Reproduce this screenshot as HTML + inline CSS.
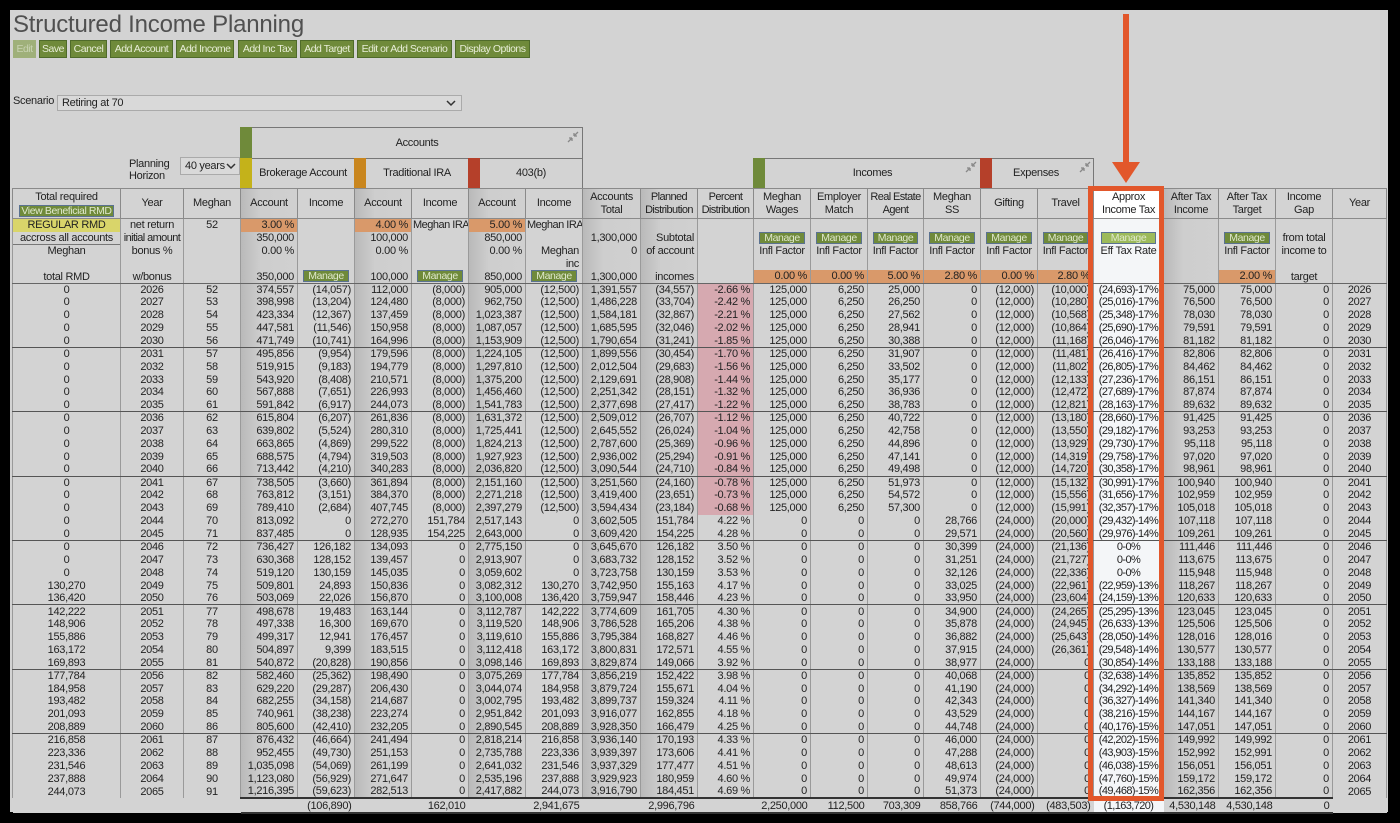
<!DOCTYPE html>
<html><head><meta charset="utf-8"><style>
*{box-sizing:border-box}
body{margin:0;width:1400px;height:823px;background:#000;position:relative;overflow:hidden;font-family:"Liberation Sans",sans-serif;font-size:11px;color:#222;letter-spacing:-0.3px}
.pg{position:absolute;left:10px;top:10px;width:1378px;height:802px;background:#d3d3d3}
.a{position:absolute}
h1{position:absolute;left:13px;top:11px;margin:0;font-size:24px;font-weight:normal;color:#505050;letter-spacing:-0.2px}
.btn{position:absolute;top:40px;height:18px;background:#6f8a3a;border:1px solid #4f6b2a;color:#e8eed8;font-size:10.5px;letter-spacing:-0.5px;line-height:16px;text-align:center;white-space:nowrap;overflow:hidden}
.mb{display:block;margin:0 2px;height:12px;background:#6f8a3a;border:1px solid #5a7290;color:#dfe8cc;font-size:10.5px;letter-spacing:-0.4px;line-height:10px;text-align:center;overflow:hidden}
.sel{position:absolute;background:#d9d9d9;border:1px solid #aaa;font-size:11px;line-height:14px;padding-left:4px}
table{position:absolute;left:12px;top:188px;border-collapse:collapse;table-layout:fixed;width:1374px}
td{padding:0 3px;white-space:nowrap;overflow:hidden;border-left:1px solid #9a9a9a;border-right:1px solid #9a9a9a;line-height:12px;text-align:right}
td:nth-child(-n+3),td:nth-child(19),td:nth-child(23){text-align:center}
td:nth-child(19){letter-spacing:-0.6px;padding:0 1px}
tr.h td{height:30px;text-align:center;border:1px solid #8a8a8a;line-height:13px;vertical-align:middle;padding:0 1px}
tr.p td{height:13px;vertical-align:middle}
tr.p4 td{height:23px;vertical-align:bottom;border-bottom:1px solid #666}
tbody.d tr{height:12.875px}
tbody.d td{height:12.875px}
tr.g td{border-bottom:1px solid #555}
td.n{background:#d6a9b0}
td.o{background:#d9996a}
td.l{text-align:left;padding:0 1px;letter-spacing:-0.5px}
.ob{display:block;background:#d9996a;margin:0 -3px;padding:0 3px;height:13px;line-height:13px}
col.k{background:linear-gradient(90deg,#b9b9b9,#cecece 35%,#d0d0d0)}
col.t{background:#f4f6f8}
tr.tot td{border-left:none;border-right:none;border-top:2px solid #333;border-bottom:2px solid #333;height:15px}
tr.tot td.e{border:none;background:#d3d3d3}
.box{position:absolute;border:1px solid #777;background:#d3d3d3;text-align:center}
.sw{position:absolute}
.sq{letter-spacing:-0.6px}
</style></head><body>
<div class="pg"></div>
<h1>Structured Income Planning</h1>
<div class="btn" style="left:13px;width:23px;background:#9fb07a;border-color:#9fb07a;color:#c9d3b3">Edit</div>
<div class="btn" style="left:39px;width:28px">Save</div>
<div class="btn" style="left:70px;width:37px">Cancel</div>
<div class="btn" style="left:110px;width:63px">Add Account</div>
<div class="btn" style="left:176px;width:58px">Add Income</div>
<div class="btn" style="left:238px;width:59px">Add Inc Tax</div>
<div class="btn" style="left:300px;width:54px">Add Target</div>
<div class="btn" style="left:357px;width:95px">Edit or Add Scenario</div>
<div class="btn" style="left:455px;width:75px">Display Options</div>
<div class="a" style="left:13px;top:95px">Scenario</div>
<div class="sel" style="left:57px;top:95px;width:405px;height:16px">Retiring at 70<svg style="position:absolute;right:5px;top:4px" width="10" height="7"><path d="M1 1 L5 5 L9 1" stroke="#333" stroke-width="1.5" fill="none"/></svg></div>
<div class="a" style="left:129px;top:158px;line-height:12px">Planning<br>Horizon</div>
<div class="sel" style="left:180px;top:157px;width:60px;height:18px;line-height:16px">40 years<svg style="position:absolute;right:3px;top:5px" width="10" height="7"><path d="M1 1 L5 5 L9 1" stroke="#333" stroke-width="1.5" fill="none"/></svg></div>

<div class="box" style="left:240px;top:127px;width:343px;height:62px"></div>
<div class="a" style="left:252px;top:158px;width:330px;border-top:1px solid #777"></div>
<div class="sw" style="left:240px;top:127px;width:12px;height:31px;background:#6f8a3a"></div>
<div class="a" style="left:252px;top:137px;width:330px;text-align:center">Accounts</div>
<div class="sw" style="left:240px;top:158px;width:12px;height:30px;background:#c4b21a"></div>
<div class="a" style="left:252px;top:167px;width:102px;text-align:center">Brokerage Account</div>
<div class="sw" style="left:354px;top:158px;width:12px;height:30px;background:#c9861e"></div>
<div class="a" style="left:366px;top:167px;width:102px;text-align:center">Traditional IRA</div>
<div class="sw" style="left:468px;top:158px;width:12px;height:30px;background:#b5402a"></div>
<div class="a" style="left:480px;top:167px;width:102px;text-align:center">403(b)</div>

<div class="box" style="left:753px;top:158px;width:228px;height:31px"></div>
<div class="sw" style="left:753px;top:158px;width:12px;height:30px;background:#6f8a3a"></div>
<div class="a" style="left:765px;top:167px;width:215px;text-align:center">Incomes</div>
<div class="box" style="left:980px;top:158px;width:114px;height:31px"></div>
<div class="sw" style="left:980px;top:158px;width:12px;height:30px;background:#b5402a"></div>
<div class="a" style="left:992px;top:167px;width:88px;text-align:center">Expenses</div>

<svg class="a" style="left:566px;top:130px" width="14" height="14"><path d="M2 12 L6 8 M6 8 L3 8 M6 8 L6 11 M12 2 L8 6 M8 6 L11 6 M8 6 L8 3" stroke="#888" stroke-width="1.3" fill="none"/></svg>
<svg class="a" style="left:964px;top:160px" width="14" height="14"><path d="M2 12 L6 8 M6 8 L3 8 M6 8 L6 11 M12 2 L8 6 M8 6 L11 6 M8 6 L8 3" stroke="#888" stroke-width="1.3" fill="none"/></svg>
<svg class="a" style="left:1078px;top:160px" width="14" height="14"><path d="M2 12 L6 8 M6 8 L3 8 M6 8 L6 11 M12 2 L8 6 M8 6 L11 6 M8 6 L8 3" stroke="#888" stroke-width="1.3" fill="none"/></svg>

<table>
<colgroup><col style="width:108px"><col style="width:63px"><col style="width:57px"><col class="k" style="width:57px"><col style="width:57px"><col class="k" style="width:57px"><col style="width:57px"><col class="k" style="width:57px"><col style="width:57px"><col class="k" style="width:58px"><col class="k" style="width:57px"><col style="width:56px"><col style="width:57px"><col style="width:57px"><col style="width:56px"><col style="width:57px"><col style="width:57px"><col style="width:56px"><col class="t" style="width:70px"><col class="k" style="width:55px"><col style="width:57px"><col style="width:57px"><col style="width:54px"></colgroup>
<tbody>
<tr class="h"><td style="padding:0 4px">Total required<span class="mb" style="margin:1px 2px 0;height:12px">View Beneficial RMD</span></td><td>Year</td><td>Meghan</td><td>Account</td><td>Income</td><td>Account</td><td>Income</td><td>Account</td><td>Income</td><td>Accounts<br>Total</td><td class="sq">Planned<br>Distribution</td><td class="sq">Percent<br>Distribution</td><td>Meghan<br>Wages</td><td>Employer<br>Match</td><td class="sq">Real Estate<br>Agent</td><td>Meghan<br>SS</td><td>Gifting</td><td>Travel</td><td style="background:#fff;letter-spacing:-0.3px">Approx<br>Income Tax</td><td>After Tax<br>Income</td><td>After Tax<br>Target</td><td>Income<br>Gap</td><td>Year</td></tr>
<tr class="p"><td style="background:#d9d56a">REGULAR RMD</td><td>net return</td><td>52</td><td class="o">3.00 %</td><td></td><td class="o">4.00 %</td><td class="l">Meghan IRA</td><td class="o">5.00 %</td><td class="l">Meghan IRA</td><td></td><td></td><td></td><td></td><td></td><td></td><td></td><td></td><td></td><td></td><td></td><td></td><td></td><td></td></tr>
<tr class="p"><td>accross all accounts</td><td class="sq" style="padding:0 1px">initial amount</td><td></td><td>350,000</td><td></td><td>100,000</td><td></td><td>850,000</td><td></td><td>1,300,000</td><td>Subtotal</td><td></td><td><span class="mb">Manage</span></td><td><span class="mb">Manage</span></td><td><span class="mb">Manage</span></td><td><span class="mb">Manage</span></td><td><span class="mb">Manage</span></td><td><span class="mb">Manage</span></td><td><span class="mb" style="background:#9cba5a;margin:0 6px">Manage</span></td><td></td><td><span class="mb">Manage</span></td><td style="text-align:center">from total</td><td></td></tr>
<tr class="p"><td style="border-top:1px solid #777">Meghan</td><td>bonus %</td><td></td><td>0.00 %</td><td></td><td>0.00 %</td><td></td><td>0.00 %</td><td>Meghan</td><td>0</td><td>of account</td><td></td><td style="text-align:center">Infl Factor</td><td style="text-align:center">Infl Factor</td><td style="text-align:center">Infl Factor</td><td style="text-align:center">Infl Factor</td><td style="text-align:center">Infl Factor</td><td style="text-align:center">Infl Factor</td><td style="letter-spacing:-0.3px">Eff Tax Rate</td><td></td><td style="text-align:center">Infl Factor</td><td style="text-align:center">income to</td><td></td></tr>
<tr class="p4"><td>total RMD</td><td>w/bonus</td><td></td><td>350,000</td><td><span class="mb" style="margin-bottom:1px">Manage</span></td><td>100,000</td><td><span class="mb" style="margin-bottom:1px">Manage</span></td><td>850,000</td><td>inc<span class="mb" style="margin-bottom:1px">Manage</span></td><td>1,300,000</td><td>incomes</td><td></td><td><span class="ob">0.00 %</span></td><td><span class="ob">0.00 %</span></td><td><span class="ob">5.00 %</span></td><td><span class="ob">2.80 %</span></td><td><span class="ob">0.00 %</span></td><td><span class="ob">2.80 %</span></td><td></td><td></td><td><span class="ob">2.00 %</span></td><td style="text-align:center">target</td><td></td></tr>
</tbody>
<tbody class="d">
<tr><td>0<td>2026<td>52<td>374,557<td>(14,057)<td>112,000<td>(8,000)<td>905,000<td>(12,500)<td>1,391,557<td>(34,557)<td class="n">-2.66 %<td>125,000<td>6,250<td>25,000<td>0<td>(12,000)<td>(10,000)<td>(24,693)-17%<td>75,000<td>75,000<td>0<td>2026</tr>
<tr><td>0<td>2027<td>53<td>398,998<td>(13,204)<td>124,480<td>(8,000)<td>962,750<td>(12,500)<td>1,486,228<td>(33,704)<td class="n">-2.42 %<td>125,000<td>6,250<td>26,250<td>0<td>(12,000)<td>(10,280)<td>(25,016)-17%<td>76,500<td>76,500<td>0<td>2027</tr>
<tr><td>0<td>2028<td>54<td>423,334<td>(12,367)<td>137,459<td>(8,000)<td>1,023,387<td>(12,500)<td>1,584,181<td>(32,867)<td class="n">-2.21 %<td>125,000<td>6,250<td>27,562<td>0<td>(12,000)<td>(10,568)<td>(25,348)-17%<td>78,030<td>78,030<td>0<td>2028</tr>
<tr><td>0<td>2029<td>55<td>447,581<td>(11,546)<td>150,958<td>(8,000)<td>1,087,057<td>(12,500)<td>1,685,595<td>(32,046)<td class="n">-2.02 %<td>125,000<td>6,250<td>28,941<td>0<td>(12,000)<td>(10,864)<td>(25,690)-17%<td>79,591<td>79,591<td>0<td>2029</tr>
<tr class="g"><td>0<td>2030<td>56<td>471,749<td>(10,741)<td>164,996<td>(8,000)<td>1,153,909<td>(12,500)<td>1,790,654<td>(31,241)<td class="n">-1.85 %<td>125,000<td>6,250<td>30,388<td>0<td>(12,000)<td>(11,168)<td>(26,046)-17%<td>81,182<td>81,182<td>0<td>2030</tr>
<tr><td>0<td>2031<td>57<td>495,856<td>(9,954)<td>179,596<td>(8,000)<td>1,224,105<td>(12,500)<td>1,899,556<td>(30,454)<td class="n">-1.70 %<td>125,000<td>6,250<td>31,907<td>0<td>(12,000)<td>(11,481)<td>(26,416)-17%<td>82,806<td>82,806<td>0<td>2031</tr>
<tr><td>0<td>2032<td>58<td>519,915<td>(9,183)<td>194,779<td>(8,000)<td>1,297,810<td>(12,500)<td>2,012,504<td>(29,683)<td class="n">-1.56 %<td>125,000<td>6,250<td>33,502<td>0<td>(12,000)<td>(11,802)<td>(26,805)-17%<td>84,462<td>84,462<td>0<td>2032</tr>
<tr><td>0<td>2033<td>59<td>543,920<td>(8,408)<td>210,571<td>(8,000)<td>1,375,200<td>(12,500)<td>2,129,691<td>(28,908)<td class="n">-1.44 %<td>125,000<td>6,250<td>35,177<td>0<td>(12,000)<td>(12,133)<td>(27,236)-17%<td>86,151<td>86,151<td>0<td>2033</tr>
<tr><td>0<td>2034<td>60<td>567,888<td>(7,651)<td>226,993<td>(8,000)<td>1,456,460<td>(12,500)<td>2,251,342<td>(28,151)<td class="n">-1.32 %<td>125,000<td>6,250<td>36,936<td>0<td>(12,000)<td>(12,472)<td>(27,689)-17%<td>87,874<td>87,874<td>0<td>2034</tr>
<tr class="g"><td>0<td>2035<td>61<td>591,842<td>(6,917)<td>244,073<td>(8,000)<td>1,541,783<td>(12,500)<td>2,377,698<td>(27,417)<td class="n">-1.22 %<td>125,000<td>6,250<td>38,783<td>0<td>(12,000)<td>(12,821)<td>(28,163)-17%<td>89,632<td>89,632<td>0<td>2035</tr>
<tr><td>0<td>2036<td>62<td>615,804<td>(6,207)<td>261,836<td>(8,000)<td>1,631,372<td>(12,500)<td>2,509,012<td>(26,707)<td class="n">-1.12 %<td>125,000<td>6,250<td>40,722<td>0<td>(12,000)<td>(13,180)<td>(28,660)-17%<td>91,425<td>91,425<td>0<td>2036</tr>
<tr><td>0<td>2037<td>63<td>639,802<td>(5,524)<td>280,310<td>(8,000)<td>1,725,441<td>(12,500)<td>2,645,552<td>(26,024)<td class="n">-1.04 %<td>125,000<td>6,250<td>42,758<td>0<td>(12,000)<td>(13,550)<td>(29,182)-17%<td>93,253<td>93,253<td>0<td>2037</tr>
<tr><td>0<td>2038<td>64<td>663,865<td>(4,869)<td>299,522<td>(8,000)<td>1,824,213<td>(12,500)<td>2,787,600<td>(25,369)<td class="n">-0.96 %<td>125,000<td>6,250<td>44,896<td>0<td>(12,000)<td>(13,929)<td>(29,730)-17%<td>95,118<td>95,118<td>0<td>2038</tr>
<tr><td>0<td>2039<td>65<td>688,575<td>(4,794)<td>319,503<td>(8,000)<td>1,927,923<td>(12,500)<td>2,936,002<td>(25,294)<td class="n">-0.91 %<td>125,000<td>6,250<td>47,141<td>0<td>(12,000)<td>(14,319)<td>(29,758)-17%<td>97,020<td>97,020<td>0<td>2039</tr>
<tr class="g"><td>0<td>2040<td>66<td>713,442<td>(4,210)<td>340,283<td>(8,000)<td>2,036,820<td>(12,500)<td>3,090,544<td>(24,710)<td class="n">-0.84 %<td>125,000<td>6,250<td>49,498<td>0<td>(12,000)<td>(14,720)<td>(30,358)-17%<td>98,961<td>98,961<td>0<td>2040</tr>
<tr><td>0<td>2041<td>67<td>738,505<td>(3,660)<td>361,894<td>(8,000)<td>2,151,160<td>(12,500)<td>3,251,560<td>(24,160)<td class="n">-0.78 %<td>125,000<td>6,250<td>51,973<td>0<td>(12,000)<td>(15,132)<td>(30,991)-17%<td>100,940<td>100,940<td>0<td>2041</tr>
<tr><td>0<td>2042<td>68<td>763,812<td>(3,151)<td>384,370<td>(8,000)<td>2,271,218<td>(12,500)<td>3,419,400<td>(23,651)<td class="n">-0.73 %<td>125,000<td>6,250<td>54,572<td>0<td>(12,000)<td>(15,556)<td>(31,656)-17%<td>102,959<td>102,959<td>0<td>2042</tr>
<tr><td>0<td>2043<td>69<td>789,410<td>(2,684)<td>407,745<td>(8,000)<td>2,397,279<td>(12,500)<td>3,594,434<td>(23,184)<td class="n">-0.68 %<td>125,000<td>6,250<td>57,300<td>0<td>(12,000)<td>(15,991)<td>(32,357)-17%<td>105,018<td>105,018<td>0<td>2043</tr>
<tr><td>0<td>2044<td>70<td>813,092<td>0<td>272,270<td>151,784<td>2,517,143<td>0<td>3,602,505<td>151,784<td>4.22 %<td>0<td>0<td>0<td>28,766<td>(24,000)<td>(20,000)<td>(29,432)-14%<td>107,118<td>107,118<td>0<td>2044</tr>
<tr class="g"><td>0<td>2045<td>71<td>837,485<td>0<td>128,935<td>154,225<td>2,643,000<td>0<td>3,609,420<td>154,225<td>4.28 %<td>0<td>0<td>0<td>29,571<td>(24,000)<td>(20,560)<td>(29,976)-14%<td>109,261<td>109,261<td>0<td>2045</tr>
<tr><td>0<td>2046<td>72<td>736,427<td>126,182<td>134,093<td>0<td>2,775,150<td>0<td>3,645,670<td>126,182<td>3.50 %<td>0<td>0<td>0<td>30,399<td>(24,000)<td>(21,136)<td>0-0%<td>111,446<td>111,446<td>0<td>2046</tr>
<tr><td>0<td>2047<td>73<td>630,368<td>128,152<td>139,457<td>0<td>2,913,907<td>0<td>3,683,732<td>128,152<td>3.52 %<td>0<td>0<td>0<td>31,251<td>(24,000)<td>(21,727)<td>0-0%<td>113,675<td>113,675<td>0<td>2047</tr>
<tr><td>0<td>2048<td>74<td>519,120<td>130,159<td>145,035<td>0<td>3,059,602<td>0<td>3,723,758<td>130,159<td>3.53 %<td>0<td>0<td>0<td>32,126<td>(24,000)<td>(22,336)<td>0-0%<td>115,948<td>115,948<td>0<td>2048</tr>
<tr><td>130,270<td>2049<td>75<td>509,801<td>24,893<td>150,836<td>0<td>3,082,312<td>130,270<td>3,742,950<td>155,163<td>4.17 %<td>0<td>0<td>0<td>33,025<td>(24,000)<td>(22,961)<td>(22,959)-13%<td>118,267<td>118,267<td>0<td>2049</tr>
<tr class="g"><td>136,420<td>2050<td>76<td>503,069<td>22,026<td>156,870<td>0<td>3,100,008<td>136,420<td>3,759,947<td>158,446<td>4.23 %<td>0<td>0<td>0<td>33,950<td>(24,000)<td>(23,604)<td>(24,159)-13%<td>120,633<td>120,633<td>0<td>2050</tr>
<tr><td>142,222<td>2051<td>77<td>498,678<td>19,483<td>163,144<td>0<td>3,112,787<td>142,222<td>3,774,609<td>161,705<td>4.30 %<td>0<td>0<td>0<td>34,900<td>(24,000)<td>(24,265)<td>(25,295)-13%<td>123,045<td>123,045<td>0<td>2051</tr>
<tr><td>148,906<td>2052<td>78<td>497,338<td>16,300<td>169,670<td>0<td>3,119,520<td>148,906<td>3,786,528<td>165,206<td>4.38 %<td>0<td>0<td>0<td>35,878<td>(24,000)<td>(24,945)<td>(26,633)-13%<td>125,506<td>125,506<td>0<td>2052</tr>
<tr><td>155,886<td>2053<td>79<td>499,317<td>12,941<td>176,457<td>0<td>3,119,610<td>155,886<td>3,795,384<td>168,827<td>4.46 %<td>0<td>0<td>0<td>36,882<td>(24,000)<td>(25,643)<td>(28,050)-14%<td>128,016<td>128,016<td>0<td>2053</tr>
<tr><td>163,172<td>2054<td>80<td>504,897<td>9,399<td>183,515<td>0<td>3,112,418<td>163,172<td>3,800,831<td>172,571<td>4.55 %<td>0<td>0<td>0<td>37,915<td>(24,000)<td>(26,361)<td>(29,548)-14%<td>130,577<td>130,577<td>0<td>2054</tr>
<tr class="g"><td>169,893<td>2055<td>81<td>540,872<td>(20,828)<td>190,856<td>0<td>3,098,146<td>169,893<td>3,829,874<td>149,066<td>3.92 %<td>0<td>0<td>0<td>38,977<td>(24,000)<td>0<td>(30,854)-14%<td>133,188<td>133,188<td>0<td>2055</tr>
<tr><td>177,784<td>2056<td>82<td>582,460<td>(25,362)<td>198,490<td>0<td>3,075,269<td>177,784<td>3,856,219<td>152,422<td>3.98 %<td>0<td>0<td>0<td>40,068<td>(24,000)<td>0<td>(32,638)-14%<td>135,852<td>135,852<td>0<td>2056</tr>
<tr><td>184,958<td>2057<td>83<td>629,220<td>(29,287)<td>206,430<td>0<td>3,044,074<td>184,958<td>3,879,724<td>155,671<td>4.04 %<td>0<td>0<td>0<td>41,190<td>(24,000)<td>0<td>(34,292)-14%<td>138,569<td>138,569<td>0<td>2057</tr>
<tr><td>193,482<td>2058<td>84<td>682,255<td>(34,158)<td>214,687<td>0<td>3,002,795<td>193,482<td>3,899,737<td>159,324<td>4.11 %<td>0<td>0<td>0<td>42,343<td>(24,000)<td>0<td>(36,327)-14%<td>141,340<td>141,340<td>0<td>2058</tr>
<tr><td>201,093<td>2059<td>85<td>740,961<td>(38,238)<td>223,274<td>0<td>2,951,842<td>201,093<td>3,916,077<td>162,855<td>4.18 %<td>0<td>0<td>0<td>43,529<td>(24,000)<td>0<td>(38,216)-15%<td>144,167<td>144,167<td>0<td>2059</tr>
<tr class="g"><td>208,889<td>2060<td>86<td>805,600<td>(42,410)<td>232,205<td>0<td>2,890,545<td>208,889<td>3,928,350<td>166,479<td>4.25 %<td>0<td>0<td>0<td>44,748<td>(24,000)<td>0<td>(40,176)-15%<td>147,051<td>147,051<td>0<td>2060</tr>
<tr><td>216,858<td>2061<td>87<td>876,432<td>(46,664)<td>241,494<td>0<td>2,818,214<td>216,858<td>3,936,140<td>170,193<td>4.33 %<td>0<td>0<td>0<td>46,000<td>(24,000)<td>0<td>(42,202)-15%<td>149,992<td>149,992<td>0<td>2061</tr>
<tr><td>223,336<td>2062<td>88<td>952,455<td>(49,730)<td>251,153<td>0<td>2,735,788<td>223,336<td>3,939,397<td>173,606<td>4.41 %<td>0<td>0<td>0<td>47,288<td>(24,000)<td>0<td>(43,903)-15%<td>152,992<td>152,991<td>0<td>2062</tr>
<tr><td>231,546<td>2063<td>89<td>1,035,098<td>(54,069)<td>261,199<td>0<td>2,641,032<td>231,546<td>3,937,329<td>177,477<td>4.51 %<td>0<td>0<td>0<td>48,613<td>(24,000)<td>0<td>(46,038)-15%<td>156,051<td>156,051<td>0<td>2063</tr>
<tr><td>237,888<td>2064<td>90<td>1,123,080<td>(56,929)<td>271,647<td>0<td>2,535,196<td>237,888<td>3,929,923<td>180,959<td>4.60 %<td>0<td>0<td>0<td>49,974<td>(24,000)<td>0<td>(47,760)-15%<td>159,172<td>159,172<td>0<td>2064</tr>
<tr><td>244,073<td>2065<td>91<td>1,216,395<td>(59,623)<td>282,513<td>0<td>2,417,882<td>244,073<td>3,916,790<td>184,451<td>4.69 %<td>0<td>0<td>0<td>51,373<td>(24,000)<td>0<td>(49,468)-15%<td>162,356<td>162,356<td>0<td>2065</tr>
<tr class="tot"><td class="e"><td class="e"><td class="e"><td style="background:#d3d3d3"><td style="background:#d3d3d3">(106,890)<td style="background:#d3d3d3"><td style="background:#d3d3d3">162,010<td style="background:#d3d3d3"><td style="background:#d3d3d3">2,941,675<td style="background:#d3d3d3"><td style="background:#d3d3d3">2,996,796<td style="background:#d3d3d3"><td style="background:#d3d3d3">2,250,000<td style="background:#d3d3d3">112,500<td style="background:#d3d3d3">703,309<td style="background:#d3d3d3">858,766<td style="background:#d3d3d3">(744,000)<td style="background:#d3d3d3">(483,503)<td style="background:#f4f6f8">(1,163,720)<td style="background:#d3d3d3">4,530,148<td style="background:#d3d3d3">4,530,148<td style="background:#d3d3d3">0<td class="e"></tr>
</tbody>
</table>

<div class="a" style="left:1088px;top:186px;width:76px;height:615px;border:5px solid #e2572b"></div>
<div class="a" style="left:1123px;top:14px;width:6px;height:152px;background:#e2572b"></div>
<svg class="a" style="left:1112px;top:160px" width="28" height="24"><path d="M0 2 L28 2 L14 23 Z" fill="#e2572b"/></svg>
</body></html>
